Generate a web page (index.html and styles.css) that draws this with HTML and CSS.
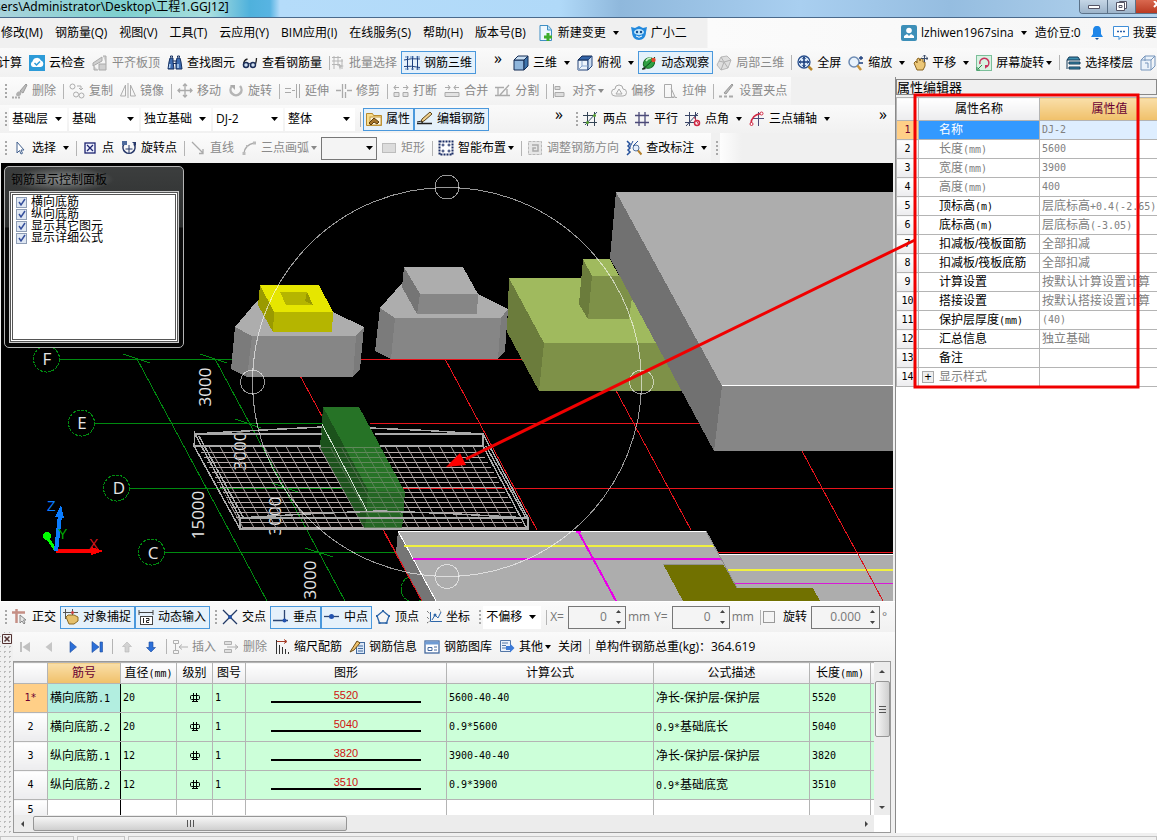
FILE: index.html
```html
<!DOCTYPE html>
<html lang="zh-CN">
<head>
    <meta charset="UTF-8">
    <meta name="viewport" content="width=device-width, initial-scale=1.0">
    <title>工程1.GGJ12</title>
    <link rel="stylesheet" href="styles.css">
</head>
<body>
<svg class="sprite" aria-hidden="true">
    <symbol id="i-newdoc" viewBox="0 0 16 16"><path d="M2 .5h8l3.500 4v11H2z" fill="#eef7fd" stroke="#3f8fc4"/><path d="M9.500 1v4h4" fill="#bfe0f4" stroke="#3f8fc4"/><path d="M8.500 8h3v2.500H14v3h-2.500V16h-3v-2.500H6v-3h2.500z" fill="#3fae2a"/></symbol>
    <symbol id="i-mascot" viewBox="0 0 16 16"><path d="M4 3l4-2 4 2 4-1-1 5c0 5-3 8-7 8s-7-3-7-8L0 2z" fill="#2389dd"/><ellipse cx="8" cy="7" rx="5" ry="3" fill="#bfe4fb"/><circle cx="6" cy="7" r="1.200" fill="#124a8c"/><circle cx="10" cy="7" r="1.200" fill="#124a8c"/><path d="M5 11q3 2.500 6 0" stroke="#fff" fill="none"/></symbol>
    <symbol id="i-user" viewBox="0 0 16 16"><rect width="16" height="16" rx="2" fill="#3d8fb8"/><circle cx="8" cy="5.500" r="2.800" fill="#fff"/><path d="M3 13v-2l3-2 2 2 2-2 3 2v2z" fill="#fff"/></symbol>
    <symbol id="i-bell" viewBox="0 0 16 16"><path d="M8 1c-3 0-4 2-4 5v3l-2 3h12l-2-3V6c0-3-1-5-4-5z" fill="#1f86e8"/><path d="M6 13h4l-2 2z" fill="#174f96"/></symbol>
    <symbol id="i-chat" viewBox="0 0 16 16"><path d="M.500 1.500h15v10H9l-3 3v-3H.500z" fill="#fff" stroke="#3f8ed8"/><path d="M4 6.500h2m1 0h2m1 0h2" stroke="#2a5fa8" stroke-width="1.500"/></symbol>
    <symbol id="i-cloud" viewBox="0 0 16 16"><rect width="16" height="16" fill="#2d9bd8"/><path d="M4 12a3 3 0 0 1-.5-5.500A4.500 4.500 0 0 1 12 5.500 3.400 3.400 0 0 1 12 12z" fill="#fff"/><path d="M5.500 8l2 2 3.500-3.500" stroke="#2d9bd8" stroke-width="1.500" fill="none"/></symbol>
    <symbol id="i-slabtop" viewBox="0 0 16 16"><path d="M1 8l9-6v4l-9 5zM7 9h7v6H7zM11 1h3v8M2 11v4h4" fill="#d0d0d0" stroke="#aaa"/></symbol>
    <symbol id="i-find" viewBox="0 0 16 16"><path d="M3 3h3v4l1 7H1l1-7zM10 3h3l1 4 1 7H9V7z" fill="#3e6cb0" stroke="#152f5f"/><path d="M6 6h4M6 8.500h4M3.500 2.500V1h2v1.500M10.500 2.500V1h2v1.500" stroke="#152f5f" fill="none"/><path d="M3 9l-.5 4M11 9v4" stroke="#b8d6f5" stroke-width="1.500"/></symbol>
    <symbol id="i-glasses" viewBox="0 0 16 16"><path d="M5.500 4q-4 1-4 6M14.500 3q0 3-1 6" fill="none" stroke="#222" stroke-width="1.300"/><circle cx="4" cy="10" r="2.500" fill="#cfe0f2" stroke="#1c2e58" stroke-width="1.500"/><circle cx="11" cy="10" r="2.500" fill="#cfe0f2" stroke="#1c2e58" stroke-width="1.500"/><path d="M6 9q1-1 2.500 0" fill="none" stroke="#1c2e58"/></symbol>
    <symbol id="i-batch" viewBox="0 0 16 16"><path d="M.500 1v14M3 2.500h9M3 6h11M3 9.500h8M5 1v13M9 1v10M13 4v10" stroke="#b5b5b5" fill="none"/><path d="M9 9l6 2-3 1-1 3z" fill="#bbb"/></symbol>
    <symbol id="i-rebar3d" viewBox="0 0 16 16"><path d="M3.500 1v14M8.500 1v14M13.500 1v14M0 5q7-2 16-1M0 11.500q7-1 16 1" stroke="#1c3f7e" fill="none"/><path d="M1 2h4M6 2h4M12 2h4M1 14h4M7 14h3M12 14h4" stroke="#5f87bd"/></symbol>
    <symbol id="i-cube" viewBox="0 0 16 16"><path d="M1 5h10v10H1z" fill="#8fb6dc" stroke="#142d55"/><path d="M1 5l4-4h10l-4 4z" fill="#c8def2" stroke="#142d55"/><path d="M11 5l4-4v10l-4 4z" fill="#3f74ab" stroke="#142d55"/></symbol>
    <symbol id="i-topview" viewBox="0 0 16 16"><path d="M1 5h10v10H1z" fill="#eef4fb" stroke="#24457a"/><path d="M1 5l4-4h10l-4 4z" fill="#3465a8" stroke="#142d55"/><path d="M11 5l4-4v10l-4 4z" fill="#cbdcf0" stroke="#24457a"/><path d="M5 6v5l-4 4M5 11h6" stroke="#88a5cc" fill="none"/></symbol>
    <symbol id="i-orbit" viewBox="0 0 16 16"><ellipse cx="8" cy="8" rx="6" ry="5" transform="rotate(-35 8 8)" fill="#2ea043" stroke="#176b28"/><path d="M1 14Q6 12 14 2" stroke="#0b4718" fill="none"/><path d="M5 6q2-3 5-3" stroke="#c7f0c8" stroke-width="1.500" fill="none"/><circle cx="12.500" cy="5" r="2.200" fill="#e0452c"/><path d="M1 15l2-3 2 2z" fill="#222"/></symbol>
    <symbol id="i-local3d" viewBox="0 0 16 16"><path d="M1 10L5 2l6-1 4 4-3 8-7 2z" fill="#dedede" stroke="#b8b8b8"/><path d="M5 2l3 5 7-2M8 7l-3 8M3 6l4 1M8 7l4 6" stroke="#b0b0b0" fill="none"/></symbol>
    <symbol id="i-full" viewBox="0 0 16 16"><circle cx="7" cy="7" r="6" fill="#dbeafa" stroke="#294f8c" stroke-width="1.300"/><path d="M7 2.500v9M2.500 7h9" stroke="#163a7a" stroke-width="1.500"/><path d="M5.500 4L7 2l1.500 2M5.500 10L7 12l1.500-2M4 5.500L2 7l2 1.500M10 5.500L12 7l-2 1.500" fill="none" stroke="#163a7a"/><path d="M11.500 11.500l3.500 3.500" stroke="#b8862b" stroke-width="2.500"/></symbol>
    <symbol id="i-zoom" viewBox="0 0 16 16"><circle cx="6" cy="7" r="5" fill="#e8f2fc" stroke="#6d8bb3" stroke-width="1.500"/><path d="M9.500 10.500L13 15" stroke="#c8933a" stroke-width="2.500"/><path d="M11 3h4M13 1v4M11 8h4" stroke="#1c3f7e" stroke-width="1.300"/></symbol>
    <symbol id="i-pan" viewBox="0 0 16 16"><path d="M2 8l2-2 1 2V4l2-1 1 3 1-3 2 1v3l2 0v4l-2 4H5z" fill="#ecc777" stroke="#8a6420"/><path d="M12.500 0v7M9 3.500h7M11 1.500L12.500 0 14 1.500M14.500 2L16 3.500 14.500 5" stroke="#3c4d6b" fill="none"/></symbol>
    <symbol id="i-spin" viewBox="0 0 16 16"><rect x=".5" y=".5" width="15" height="15" fill="#d9f2e2" stroke="#7bbf9a"/><path d="M4 9a4.500 4.500 0 1 1 6 3" fill="none" stroke="#c8305c" stroke-width="1.500"/><path d="M12 10l-3 4 0-4z" fill="#c8305c"/><path d="M2 14l4-4M1 12v3h3" stroke="#2c8a4c" fill="none"/></symbol>
    <symbol id="i-floors" viewBox="0 0 16 16"><path d="M4 2h9l2 3H2zM4 7h11v2H4zM4 12h11v2H4z" fill="#3e8fb0" stroke="#143a58"/><path d="M2 5v9" stroke="#143a58" fill="none"/></symbol>
    <symbol id="i-wirecube" viewBox="0 0 16 16"><path d="M1 5h10v10H1zM1 5l4-4h10l-4 4M15 1v10l-4 4M5 1v5M5 8h3v5" fill="#eaf2fa" stroke="#7695bb"/></symbol>
    <symbol id="i-brush" viewBox="0 0 16 16"><path d="M8 8l6-7 1 1-4 8z" fill="#bdbdbd" stroke="#999"/><path d="M4 11q2-4 5-2 1 3-2 4-3 1-3-2z" fill="#b0b0b0"/><path d="M0 14.500h2m1 0h2m1 0h2" stroke="#aaa" stroke-width="2"/></symbol>
    <symbol id="i-copy" viewBox="0 0 16 16"><g fill="none" stroke="#adadad"><circle cx="3.500" cy="3.500" r="2.500"/><circle cx="7" cy="11.500" r="2.500"/><circle cx="12.500" cy="12.500" r="2.500"/><path d="M8 3h4v4M10 5l2 2 2-2"/></g></symbol>
    <symbol id="i-mirror" viewBox="0 0 16 16"><path d="M5.500 2v11h-5zM10.500 2v11h5zM8 0v15" fill="none" stroke="#adadad"/></symbol>
    <symbol id="i-move" viewBox="0 0 16 16"><path d="M8 1v13M1 7.500h14M6 3l2-2 2 2M6 12l2 2 2-2M3 5.500l-2 2 2 2M13 5.500l2 2-2 2" fill="none" stroke="#aaa" stroke-width="1.300"/></symbol>
    <symbol id="i-rotate" viewBox="0 0 16 16"><path d="M4 3a5.500 5.500 0 1 0 8 0" fill="none" stroke="#b5b5b5" stroke-width="2.500"/><path d="M2 2h5v5z" fill="#aaa"/></symbol>
    <symbol id="i-extend" viewBox="0 0 16 16"><path d="M0 5.500h6M0 9.500h6M7 7.500h3M11.500 1v14M14.500 1v14" fill="none" stroke="#aaa"/></symbol>
    <symbol id="i-trim" viewBox="0 0 16 16"><path d="M0 7.500h5M11 7.500h5M6.500 1v14M9.500 1v5M9.500 9v6" fill="none" stroke="#aaa" stroke-width="1.300"/></symbol>
    <symbol id="i-break" viewBox="0 0 16 16"><path d="M1 4.500h5M10 4.500h5M3 2L1 4.500 3 7M13 2l2 2.500L13 7M1 9.500h5v4H1zM10 9.500h5v4h-5z" fill="#e2e2e2" stroke="#aaa"/></symbol>
    <symbol id="i-merge" viewBox="0 0 16 16"><path d="M1 4.500h5M10 4.500h5M4 2l2 2.500L4 7M12 2l-2 2.500L12 7M1 9.500h14v4H1z" fill="#e2e2e2" stroke="#aaa"/></symbol>
    <symbol id="i-split" viewBox="0 0 16 16"><path d="M0 4.500h9M0 12.500h15M3 4v8M12 6v6M5 12L14 2" fill="none" stroke="#aaa" stroke-width="1.300"/></symbol>
    <symbol id="i-align" viewBox="0 0 16 16"><path d="M1.500 1v14M3 3.500h5v3H3zM3 9.500h9v4H3z" fill="#ddd" stroke="#aaa"/></symbol>
    <symbol id="i-offset" viewBox="0 0 16 16"><path d="M4 13a3.500 3.500 0 0 1 0-7 4 4 0 0 1 8 0 3.500 3.500 0 0 1 0 7z" fill="none" stroke="#aaa"/><path d="M5 11l3-5 3 5z" fill="none" stroke="#aaa"/></symbol>
    <symbol id="i-stretch" viewBox="0 0 16 16"><path d="M2.500 1.500h7v13h-7zM9 5l4 9h-4" fill="none" stroke="#aaa"/><path d="M4 14.500h11" stroke="#aaa" stroke-dasharray="2 1"/></symbol>
    <symbol id="i-grippt" viewBox="0 0 16 16"><path d="M5 10L13 1l1 1-7 9z" fill="#bbb" stroke="#999"/><path d="M0 13.500h3m2 0h3m2 0h4" stroke="#aaa" stroke-width="2"/></symbol>
    <symbol id="i-prop" viewBox="0 0 16 16"><path d="M.500 2.500h6l1 2h8v10H.500z" fill="#f7dc8f" stroke="#b98a2b"/><rect x="4" y="6" width="11" height="8" fill="#fff7dd" stroke="#c49a42"/><path d="M3 12l5-5 5 4-2 2-3-2-3 3z" fill="#a5752b" stroke="#5b3c10"/></symbol>
    <symbol id="i-edit" viewBox="0 0 16 16"><path d="M0 12.500h15" stroke="#222" stroke-width="1.500"/><path d="M4 11l1-3 8-7 2 2-8 7z" fill="#f0cf8a" stroke="#5c4720"/><path d="M0 11q4-2 6 1" fill="none" stroke="#222"/></symbol>
    <symbol id="i-twopt" viewBox="0 0 16 16"><path d="M4.500 1v14M11.500 1v14M0 4.500h13M0 11.500h14" stroke="#345" fill="none"/><path d="M2 14L14 1" stroke="#35536e"/><circle cx="4.500" cy="11.500" r="1.500" fill="#58a030"/><circle cx="11.500" cy="4.500" r="1.500" fill="#58a030"/></symbol>
    <symbol id="i-parallel" viewBox="0 0 16 16"><path d="M5 1v14M11 1v14M1 4.500h14M1 11.500h14" stroke="#4b4a78" stroke-width="1.300" fill="none"/></symbol>
    <symbol id="i-ptangle" viewBox="0 0 16 16"><path d="M4.500 1v14M10.500 1v8M0 4.500h13M0 11.500h9M1 15L13 2" stroke="#3a4668" fill="none"/><circle cx="12" cy="12" r="2.500" fill="none" stroke="#d02844" stroke-width="1.500"/><path d="M9 6l5 8" stroke="#d02844"/></symbol>
    <symbol id="i-threept" viewBox="0 0 16 16"><path d="M9.500 1v14M3 7.500h12" stroke="#4b4a78"/><path d="M2 13Q2 4 12 2.500" fill="none" stroke="#d02844" stroke-width="1.500"/><circle cx="2.500" cy="13" r="1.500" fill="#fff" stroke="#d02844"/><circle cx="12.500" cy="2.500" r="1.500" fill="#fff" stroke="#d02844"/></symbol>
    <symbol id="i-cursor" viewBox="0 0 16 16"><path d="M5 2v11l2.500-2.500L9 14l1.500-.7L9 10h3z" fill="#fff" stroke="#43618e"/></symbol>
    <symbol id="i-point" viewBox="0 0 16 16"><rect x="3" y="3" width="10" height="10" fill="#f1f3ff" stroke="#1d2470" stroke-width="1.300"/><path d="M5 5l6 6M11 5l-6 6" stroke="#1d2470" stroke-width="1.300"/></symbol>
    <symbol id="i-rotpoint" viewBox="0 0 16 16"><path d="M3 4a6 6 0 1 0 10 0" fill="none" stroke="#27386a" stroke-width="1.600"/><path d="M8 5v8M4.500 9h7" stroke="#27386a"/><rect x="1" y="1" width="5" height="4" fill="#4e6a9c"/><path d="M11 2h4v4z" fill="#27386a"/></symbol>
    <symbol id="i-line" viewBox="0 0 16 16"><path d="M2 2l11 11M13 9v4.500H9" stroke="#aaa" stroke-width="1.300" fill="none"/></symbol>
    <symbol id="i-arc" viewBox="0 0 16 16"><path d="M3 13Q4 5 13 3" stroke="#aaa" stroke-width="1.300" fill="none"/><path d="M1.500 12h3v3h-3zM12 1.500h3v3h-3zM5 5h2v2H5z" fill="#bbb"/></symbol>
    <symbol id="i-rect" viewBox="0 0 16 16"><rect x="1.500" y="3.500" width="13" height="9" fill="#dcdcdc" stroke="#bdbdbd"/></symbol>
    <symbol id="i-smart" viewBox="0 0 16 16"><rect x="1.500" y="1.500" width="13" height="13" fill="#fff" stroke="#1d2f66" stroke-width="2" stroke-dasharray="2 1"/><path d="M5 3.500v3M3.500 5h3M11 3.500v3M9.500 5h3M5 9.500v3M3.500 11h3M11 9.500v3M9.500 11h3" stroke="#1d2f66"/></symbol>
    <symbol id="i-adjust" viewBox="0 0 16 16"><path d="M1.500 1.500h13v13h-13z" fill="#e6e6e6" stroke="#b8b8b8" stroke-dasharray="3 1"/><path d="M5 5h6v6H6V8h3" fill="none" stroke="#aaa" stroke-width="1.500"/></symbol>
    <symbol id="i-check" viewBox="0 0 16 16"><path d="M1 1l3 3-2 2 2 2-2 2 2 2-3 3" fill="none" stroke="#26529c" stroke-width="1.500"/><path d="M7 1l-3 6M12 1L7 6" stroke="#26529c"/><circle cx="10" cy="8" r="3" fill="#e5eefb" stroke="#55749f"/><path d="M12 10.500l3.500 4" stroke="#b5812d" stroke-width="2"/></symbol>
    <symbol id="i-ortho" viewBox="0 0 16 16"><path d="M0 3.500h13M4.500 0v14" stroke="#c58f85" stroke-width="2.500"/><path d="M8 6v8l2-2 2 3 1-1-1.500-3H14z" fill="#e6e6e6" stroke="#888"/></symbol>
    <symbol id="i-snap" viewBox="0 0 16 16"><path d="M0 3.500h15M2.500 0v10M9.500 0v6" stroke="#555"/><path d="M3 8l2-2h6l4 2v4l-4 3H6z" fill="#e5c06c" stroke="#8b6a24"/><circle cx="9.500" cy="3.500" r="1.500" fill="#c44"/></symbol>
    <symbol id="i-dyninput" viewBox="0 0 16 16"><path d="M1 1v5M15 1v5M1 3.500h14" stroke="#444"/><rect x="2.500" y="7.500" width="12" height="8" fill="#fff" stroke="#444"/><path d="M5.500 9v5M8 9.500h3v2H8.500v2H11" fill="none" stroke="#222"/></symbol>
    <symbol id="i-cross" viewBox="0 0 16 16"><path d="M1 1l14 14M15 1L1 15" stroke="#223a66" stroke-width="1.300"/><circle cx="8" cy="8" r="2" fill="#2453a8"/></symbol>
    <symbol id="i-perp" viewBox="0 0 16 16"><path d="M0 11.500h15M11.500 1v11" stroke="#2b4673" stroke-width="1.300"/><circle cx="11.500" cy="11.500" r="2" fill="#2453b0"/></symbol>
    <symbol id="i-mid" viewBox="0 0 16 16"><path d="M0 7.500h15" stroke="#2b4673" stroke-width="1.300"/><circle cx="7.500" cy="7.500" r="2.500" fill="#2453b0"/></symbol>
    <symbol id="i-vertex" viewBox="0 0 16 16"><path d="M8 2l6 5-2.500 7h-7L2 7z" fill="none" stroke="#2e66a8" stroke-width="1.300"/><path d="M7 1h2v2H7zM13 6h2v2h-2zM1 6h2v2H1zM3.500 13h2v2h-2zM10.500 13h2v2h-2z" fill="#2e66a8"/></symbol>
    <symbol id="i-coord" viewBox="0 0 16 16"><path d="M4.500 3v9.500H16M6 11l3-5 3 3 3-6" fill="none" stroke="#2e66a8"/><path d="M1 2l3 3M13 0l2 3M1 8l2 2M1 14l3-2" stroke="#444" stroke-dasharray="1 1"/><circle cx="9" cy="6" r="1.500" fill="#2e66a8"/></symbol>
    <symbol id="i-first" viewBox="0 0 16 16"><path d="M3 3h2v10H3zM13 3v10L5.500 8z" fill="#c0c0c0"/></symbol>
    <symbol id="i-prev" viewBox="0 0 16 16"><path d="M11 3v10L4.500 8z" fill="#c6c6c6"/></symbol>
    <symbol id="i-next" viewBox="0 0 16 16"><path d="M5 2.500v11L11.500 8z" fill="#2c6fd8" stroke="#1b4c9e" stroke-width=".6"/></symbol>
    <symbol id="i-last" viewBox="0 0 16 16"><path d="M3 2.500v11L10 8zM11 3h2.500v10H11z" fill="#2c6fd8" stroke="#1b4c9e" stroke-width=".6"/></symbol>
    <symbol id="i-up" viewBox="0 0 16 16"><path d="M8 3l4.500 4.500H10V13H6V7.500H3.500z" fill="#d2d2d2" stroke="#b5b5b5" stroke-width=".6"/></symbol>
    <symbol id="i-down" viewBox="0 0 16 16"><path d="M8 13l4.500-4.500H10V3H6v5.500H3.500z" fill="#2c6fd8" stroke="#1b4c9e" stroke-width=".6"/></symbol>
    <symbol id="i-insert" viewBox="0 0 16 16"><path d="M1.500 1.500h5v3h-5zM1.500 11.500h5v3h-5zM7 8h9M10 5.500L7 8l3 2.500M3.500 5v6" fill="none" stroke="#b0b0b0"/></symbol>
    <symbol id="i-remove" viewBox="0 0 16 16"><path d="M1.500 2.500h7v3h-7zM1.500 10.500h7v3h-7zM4 8h11M12 5.500L15 8l-3 2.500" fill="#e0e0e0" stroke="#b0b0b0"/></symbol>
    <symbol id="i-scale" viewBox="0 0 16 16"><path d="M2.500 1v14M5.500 6v9M8.500 8v7M11.500 10v5M14.500 13v2" stroke="#333"/><path d="M3 2.500h9M10 .5l3 2-3 2" fill="none" stroke="#a33b26"/></symbol>
    <symbol id="i-info" viewBox="0 0 16 16"><rect x="7.500" y="3.500" width="8" height="11" fill="#dbe8f8" stroke="#436a9d"/><path d="M9 7h5M9 9.500h5M9 12h5" stroke="#436a9d"/><path d="M1 13l7-11 3 2-6 7z" fill="#f0c36c" stroke="#6b4d1a"/></symbol>
    <symbol id="i-lib" viewBox="0 0 16 16"><rect x="1" y="2" width="14" height="12" fill="#fff" stroke="#44699e" stroke-width="1.300"/><path d="M1 4h14" stroke="#6f9bd3" stroke-width="3"/><path d="M4 8.500h4v3H4zM10 8h3M10 11h3" fill="none" stroke="#44699e"/></symbol>
    <symbol id="i-other" viewBox="0 0 16 16"><path d="M1.500 1.500h10v11h-10z" fill="#eaf1fb" stroke="#5376a6"/><path d="M3 4h6M3 6.500h4M3 9h4" stroke="#5376a6"/><path d="M7 7h4V4.500l4.500 4.500-4.500 4.500V11H7z" fill="#3c7ad8"/></symbol>
    <symbol id="i-grade" viewBox="0 0 12 12"><rect x="1.500" y="3.500" width="9" height="4" rx="1" fill="none" stroke="#000"/><path d="M4.500 1v9M7.500 1v9M3 9.500h6" stroke="#000"/></symbol>
</svg>

<div class="app">
    <header class="titlebar">
        <span class="title-text">sers\Administrator\Desktop\工程1.GGJ12]</span>
        <div class="window-buttons">
            <button aria-label="最小化"><svg viewBox="0 0 27 12"><path d="M8.500 4.500h11v3h-11z" fill="#fff" stroke="#556"/></svg></button>
            <button aria-label="还原"><svg viewBox="0 0 27 12"><path d="M11.500.5h7v7h-7z" fill="#fff" stroke="#556"/><path d="M8.500 1.500h8v8h-8zM11 4.500h3v2h-3z" fill="#fff" stroke="#556"/></svg></button>
            <button class="close-window" aria-label="关闭窗口"><svg viewBox="0 0 27 12"><path d="M18 0l6 6M24 0l-6 6" stroke="#fff" stroke-width="2"/></svg></button>
        </div>
    </header>

    <nav class="menubar">
        <button>修改(M)</button>
        <button>钢筋量(Q)</button>
        <button>视图(V)</button>
        <button>工具(T)</button>
        <button>云应用(Y)</button>
        <button>BIM应用(I)</button>
        <button>在线服务(S)</button>
        <button>帮助(H)</button>
        <button>版本号(B)</button>
        <button class="has-icon"><svg class="icon"><use href="#i-newdoc"/></svg>新建变更<i class="arrow"></i></button>
        <button class="has-icon"><svg class="icon"><use href="#i-mascot"/></svg>广小二</button>
        <div class="account">
            <button class="has-icon"><svg class="icon"><use href="#i-user"/></svg>lzhiwen1967sina<i class="arrow"></i></button>
            <button>造价豆:0</button>
            <button aria-label="通知"><svg class="icon"><use href="#i-bell"/></svg></button>
            <button class="has-icon"><svg class="icon"><use href="#i-chat"/></svg>我要建议</button>
        </div>
    </nav>

    <div class="toolbar toolbar-main">
        <button class="tool">计算</button>
        <button class="tool"><svg class="icon"><use href="#i-cloud"/></svg>云检查</button>
        <button class="tool off"><svg class="icon"><use href="#i-slabtop"/></svg>平齐板顶</button>
        <button class="tool"><svg class="icon"><use href="#i-find"/></svg>查找图元</button>
        <button class="tool"><svg class="icon"><use href="#i-glasses"/></svg>查看钢筋量</button>
        <button class="tool off"><svg class="icon"><use href="#i-batch"/></svg>批量选择</button>
        <button class="tool on"><svg class="icon"><use href="#i-rebar3d"/></svg>钢筋三维</button>
        <button class="more" aria-label="更多">»</button>
        <button class="tool"><svg class="icon"><use href="#i-cube"/></svg>三维<i class="arrow"></i></button>
        <button class="tool"><svg class="icon"><use href="#i-topview"/></svg>俯视<i class="arrow"></i></button>
        <button class="tool on"><svg class="icon"><use href="#i-orbit"/></svg>动态观察</button>
        <button class="tool off"><svg class="icon"><use href="#i-local3d"/></svg>局部三维</button>
        <i class="sep"></i>
        <button class="tool"><svg class="icon"><use href="#i-full"/></svg>全屏</button>
        <button class="tool"><svg class="icon"><use href="#i-zoom"/></svg>缩放<i class="arrow"></i></button>
        <button class="tool"><svg class="icon"><use href="#i-pan"/></svg>平移<i class="arrow"></i></button>
        <button class="tool tight"><svg class="icon"><use href="#i-spin"/></svg>屏幕旋转<i class="arrow"></i></button>
        <i class="sep"></i>
        <button class="tool"><svg class="icon"><use href="#i-floors"/></svg>选择楼层</button>
        <button class="tool" aria-label="线框"><svg class="icon"><use href="#i-wirecube"/></svg></button>
    </div>

    <div class="workspace">
        <main class="left">
            <div class="toolbar">
                <div class="strip">
                    <i class="grip"></i>
                    <button class="tool off"><svg class="icon"><use href="#i-brush"/></svg>删除</button>
                    <i class="sep"></i>
                    <button class="tool off"><svg class="icon"><use href="#i-copy"/></svg>复制</button>
                    <button class="tool off"><svg class="icon"><use href="#i-mirror"/></svg>镜像</button>
                    <i class="sep"></i>
                    <button class="tool off"><svg class="icon"><use href="#i-move"/></svg>移动</button>
                    <button class="tool off"><svg class="icon"><use href="#i-rotate"/></svg>旋转</button>
                    <i class="sep"></i>
                    <button class="tool off"><svg class="icon"><use href="#i-extend"/></svg>延伸</button>
                    <button class="tool off"><svg class="icon"><use href="#i-trim"/></svg>修剪</button>
                    <i class="sep"></i>
                    <button class="tool off"><svg class="icon"><use href="#i-break"/></svg>打断</button>
                    <button class="tool off"><svg class="icon"><use href="#i-merge"/></svg>合并</button>
                    <button class="tool off"><svg class="icon"><use href="#i-split"/></svg>分割</button>
                    <i class="sep"></i>
                    <button class="tool off tight"><svg class="icon"><use href="#i-align"/></svg>对齐<i class="arrow"></i></button>
                    <button class="tool off"><svg class="icon"><use href="#i-offset"/></svg>偏移</button>
                    <button class="tool off"><svg class="icon"><use href="#i-stretch"/></svg>拉伸</button>
                    <i class="sep"></i>
                    <button class="tool off"><svg class="icon"><use href="#i-grippt"/></svg>设置夹点</button>
                </div>
            </div>

            <div class="toolbar">
                <i class="grip"></i>
                <select class="pick pick-floor" aria-label="楼层"><option>基础层</option></select>
                <select class="pick" aria-label="构件分类"><option>基础</option></select>
                <select class="pick" aria-label="构件类型"><option>独立基础</option></select>
                <select class="pick" aria-label="构件"><option>DJ-2</option></select>
                <select class="pick" aria-label="范围"><option>整体</option></select>
                <i class="sep"></i>
                <button class="tool on"><svg class="icon"><use href="#i-prop"/></svg>属性</button>
                <button class="tool on"><svg class="icon"><use href="#i-edit"/></svg>编辑钢筋</button>
                <button class="more more-far" aria-label="更多">»</button>
                <i class="grip"></i>
                <button class="tool"><svg class="icon"><use href="#i-twopt"/></svg>两点</button>
                <button class="tool"><svg class="icon"><use href="#i-parallel"/></svg>平行</button>
                <button class="tool"><svg class="icon"><use href="#i-ptangle"/></svg>点角<i class="arrow"></i></button>
                <button class="tool"><svg class="icon"><use href="#i-threept"/></svg>三点辅轴<i class="arrow"></i></button>
                <button class="more more-end" aria-label="更多">»</button>
            </div>

            <div class="toolbar toolbar-draw">
                <div class="strip">
                    <i class="grip"></i>
                    <button class="tool"><svg class="icon"><use href="#i-cursor"/></svg>选择<i class="arrow"></i></button>
                    <i class="sep"></i>
                    <button class="tool"><svg class="icon"><use href="#i-point"/></svg>点</button>
                    <button class="tool"><svg class="icon"><use href="#i-rotpoint"/></svg>旋转点</button>
                    <i class="sep"></i>
                    <button class="tool off"><svg class="icon"><use href="#i-line"/></svg>直线</button>
                    <button class="tool off tight"><svg class="icon"><use href="#i-arc"/></svg>三点画弧<i class="arrow"></i></button>
                    <select class="pick pick-boxed" aria-label="画弧方式"><option></option></select>
                    <button class="tool off"><svg class="icon"><use href="#i-rect"/></svg>矩形</button>
                    <i class="sep"></i>
                    <button class="tool tight"><svg class="icon"><use href="#i-smart"/></svg>智能布置<i class="arrow"></i></button>
                    <i class="sep"></i>
                    <button class="tool off"><svg class="icon"><use href="#i-adjust"/></svg>调整钢筋方向</button>
                    <button class="tool"><svg class="icon"><use href="#i-check"/></svg>查改标注<i class="arrow"></i></button>
                </div>
                <i class="grip"></i>
                <div class="strip strip-empty"></div>
            </div>

            <section class="viewport">
                <svg class="scene" viewBox="1 163 892 438" preserveAspectRatio="xMinYMin slice">
                    <defs>
                        <pattern id="bars-x" width="10" height="5" patternUnits="userSpaceOnUse"><path d="M0 2.500h10" stroke="#b9abab"/></pattern>
                        <pattern id="bars-y" width="11" height="10" patternUnits="userSpaceOnUse" patternTransform="skewX(29)"><path d="M5.500 0v10" stroke="#a89f9f"/></pattern>
                    </defs>
                    <rect x="0" y="0" width="3000" height="3000" fill="#000"/>

                    <!-- axis grid -->
                    <g stroke="#008a10" fill="none">
                        <path d="M59 359.500h180M94 423.500h230M129 488.500h270M165 552.500h232"/>
                        <path d="M137 359l130 242M215 359l130 242"/>
                        <path d="M123 354l27 9M200 354l27 9M235 419l26 9M272 483l26 9M305 548l28 9"/>
                        <g stroke-dasharray="3 1">
                            <circle cx="46.500" cy="359" r="13"/>
                            <circle cx="81.500" cy="423" r="13"/>
                            <circle cx="116.500" cy="488" r="13"/>
                            <circle cx="151.500" cy="552" r="13"/>
                            <circle cx="414" cy="589" r="13"/>
                        </g>
                    </g>
                    <g stroke="#e8141c" fill="none">
                        <path d="M360 359.500h300"/>
                        <path d="M370 423.500h340"/>
                        <path d="M400 488.500h493"/>
                        <path d="M700 552.500h193"/>
                        <path d="M291 359l131 242M445 359l92 171M599 359l92 171M802 451l81 150"/>
                    </g>
                    <g class="axis-label">
                        <text x="47" y="365">F</text>
                        <text x="82" y="429">E</text>
                        <text x="119" y="494">D</text>
                        <text x="153" y="559">C</text>
                        <text transform="translate(211 387) rotate(-90)">3000</text>
                        <text transform="translate(246 451) rotate(-90)">3000</text>
                        <text transform="translate(281 516) rotate(-90)">3000</text>
                        <text transform="translate(316 580) rotate(-90)">3000</text>
                        <text transform="translate(204 515) rotate(-90)">15000</text>
                    </g>

                    <!-- foundation with yellow socket -->
                    <path d="M235 327l22-26 76 11 31 15-8 9H252z" fill="#adadad"/>
                    <path d="M235 327l17 9-5 41-16-8z" fill="#7b7b7b"/>
                    <path d="M252 336h104l-3 41H247z" fill="#868686"/>
                    <path d="M364 327l-8 9-3 41 7-8z" fill="#7b7b7b"/>
                    <path d="M260 285h59l14 27h-59z" fill="#e6e600"/>
                    <path d="M260 285l14 27-1 20-15-27z" fill="#9a9a00"/>
                    <path d="M274 312h59l-1 20h-59z" fill="#b5b500"/>
                    <path d="M280 292h27l6 13h-27z" fill="#b5b500"/>
                    <path d="M307 292l6 13-8-4z" fill="#999900"/>

                    <!-- stepped foundation -->
                    <path d="M402 283l-22 25 15 10h106l7-9-30-15z" fill="#adadad"/>
                    <path d="M380 308l15 10-4 41-16-8z" fill="#7b7b7b"/>
                    <path d="M395 318h106l-3 41H391z" fill="#868686"/>
                    <path d="M508 309l-7 9-3 41 7-8z" fill="#7b7b7b"/>
                    <path d="M404 267h59l15 27h-58z" fill="#adadad"/>
                    <path d="M404 267l16 27-3 20-15-27z" fill="#757575"/>
                    <path d="M420 294h58l-1 20h-60z" fill="#868686"/>

                    <!-- olive foundation -->
                    <path d="M509 278h121l40 65H544z" fill="#a0ba5e"/>
                    <path d="M509 278l35 65-5 48-32-59z" fill="#6b7c3c"/>
                    <path d="M544 343h126l30 48H539z" fill="#7e9148"/>
                    <path d="M583 259h27l9 17h-27z" fill="#a0ba5e"/>
                    <path d="M583 259l9 17-4 43-9-15z" fill="#6b7c3c"/>
                    <path d="M592 276h28l12 21-3 22h-41z" fill="#7e9148"/>

                    <!-- large block -->
                    <path d="M616 192h277v194H722z" fill="#adadad"/>
                    <path d="M616 192l106 194-8 65-104-193z" fill="#717171"/>
                    <path d="M722 386h171v65H714z" fill="#868686"/>
                    <path d="M722 385.500h171" stroke="#fff"/>

                    <!-- selected pad with rebar mesh -->
                    <path d="M200 450h281l44 78H242z" fill="url(#bars-x)"/>
                    <path d="M200 447h281l44 81H242z" fill="url(#bars-y)"/>
                    <path d="M323 407h36l46 85-3 38h-37l-45-83z" fill="#1b521b"/>
                    <path d="M323 407h36l46 85-37-2z" fill="#267326"/>
                    <path d="M368 490l37 2-3 38h-37z" fill="#236623"/>
                    <g opacity=".4">
                        <path d="M320 447h60l25 45-3 38h-37z" fill="url(#bars-x)"/>
                        <path d="M320 447h60l25 45-3 38h-37z" fill="url(#bars-y)"/>
                    </g>
                    <path d="M322 424l45 87" stroke="#cfe0cf" fill="none"/>
                    <g fill="none" stroke="#aaa" stroke-width="1.500">
                        <path d="M195 434q64-4 127-7M370 428q57 2 113 6l45 84v11H240l-46-83 1-12 45 84v12M240 518h288M240 518q70-5 140-7 74 2 147 7"/>
                        <path d="M195 434h127M375 434h108v12l44 83M194 446h127M380 446h102M199 436l44 81M486 446l40 72"/>
                    </g>

                    <!-- raft slab -->
                    <path d="M398 531h308l12 23h175v47H436z" fill="#adadad"/>
                    <path d="M398 531l-2 21 26 49h14z" fill="#757575"/>
                    <path d="M663 564h60l14 24h76l7 13H683z" fill="#717100"/>
                    <path d="M663 564h60" stroke="#909090"/>
                    <path d="M436 601l-38-70h308M718 554.500h175" stroke="#fff" fill="none"/>
                    <path d="M404 545.500h310M727 570h166" stroke="#f0f040" stroke-width="2"/>
                    <path d="M413 558.500h308M578 531l38 70" stroke="#e800e8" stroke-width="2"/>
                    <path d="M735 583.500h158" stroke="#d818d8"/>
                    <path d="M576 531h5v2h-5z" fill="#f0f"/>
                    <path d="M384 532l38 69M858 554l25 47" stroke="#d8141c"/>
                    <path d="M706 531l31 57" stroke="#8c8c8c"/>

                    <!-- orbit ring -->
                    <g fill="none" stroke="#fff" stroke-opacity=".6">
                        <circle cx="447" cy="382" r="194.500"/>
                        <circle cx="447" cy="187" r="12"/>
                        <circle cx="252.500" cy="382" r="12"/>
                        <circle cx="641.500" cy="382" r="12"/>
                        <circle cx="447" cy="576.500" r="12"/>
                    </g>

                    <!-- axis tripod -->
                    <path d="M56 551L47 537" stroke="#0f0" stroke-width="3"/>
                    <circle cx="47" cy="536" r="4" fill="#0f0"/>
                    <path d="M56 551h38" stroke="#f00" stroke-width="4"/>
                    <path d="M91 547l12 4-12 4z" fill="#f00"/>
                    <path d="M56 551l4-36" stroke="#0a7cff" stroke-width="4"/>
                    <path d="M55 517l6-12 3 13z" fill="#0a7cff"/>
                    <g class="tripod-label">
                        <text x="47" y="511" fill="#0a7cff">Z</text>
                        <text x="89" y="549" fill="#d8141c">X</text>
                        <text x="58" y="539" fill="#0a0">Y</text>
                    </g>
                </svg>

                <form class="display-panel">
                    <h2>钢筋显示控制面板</h2>
                    <div class="display-list">
                        <label><input type="checkbox" checked>横向底筋</label>
                        <label><input type="checkbox" checked>纵向底筋</label>
                        <label><input type="checkbox" checked>显示其它图元</label>
                        <label><input type="checkbox" checked>显示详细公式</label>
                    </div>
                </form>
            </section>

            <div class="toolbar toolbar-snap">
                <i class="grip"></i>
                <button class="tool"><svg class="icon"><use href="#i-ortho"/></svg>正交</button>
                <button class="tool on"><svg class="icon"><use href="#i-snap"/></svg>对象捕捉</button>
                <button class="tool on"><svg class="icon"><use href="#i-dyninput"/></svg>动态输入</button>
                <i class="grip"></i>
                <button class="tool"><svg class="icon"><use href="#i-cross"/></svg>交点</button>
                <button class="tool on"><svg class="icon"><use href="#i-perp"/></svg>垂点</button>
                <button class="tool on"><svg class="icon"><use href="#i-mid"/></svg>中点</button>
                <button class="tool"><svg class="icon"><use href="#i-vertex"/></svg>顶点</button>
                <button class="tool"><svg class="icon"><use href="#i-coord"/></svg>坐标</button>
                <i class="grip"></i>
                <select class="pick pick-floor" aria-label="偏移方式"><option>不偏移</option></select>
                <i class="sep"></i>
                <label class="field" for="off-x">X=</label>
                <span class="spin"><input id="off-x" type="number" value="0"><i></i></span>
                <span class="unit">mm</span>
                <label class="field" for="off-y">Y=</label>
                <span class="spin"><input id="off-y" type="number" value="0"><i></i></span>
                <span class="unit">mm</span>
                <i class="sep"></i>
                <label class="rotate"><input type="checkbox">旋转</label>
                <span class="spin spin-wide"><input type="number" value="0.000" step="0.001" aria-label="旋转角度"><i></i></span>
                <span class="unit">°</span>
            </div>

            <section class="rebar">
                <div class="gutter"><button aria-label="关闭面板"><svg viewBox="0 0 10 10"><path d="M.500.5h9v9h-9z" fill="none" stroke="#533"/><path d="M2.500 2.500l5 5M7.500 2.500l-5 5" stroke="#533" stroke-width="1.500"/></svg></button></div>
                <div class="rebar-body">
                    <div class="toolbar toolbar-rebar">
                        <button class="nav" aria-label="首行"><svg class="icon"><use href="#i-first"/></svg></button>
                        <button class="nav" aria-label="上一行"><svg class="icon"><use href="#i-prev"/></svg></button>
                        <button class="nav" aria-label="下一行"><svg class="icon"><use href="#i-next"/></svg></button>
                        <button class="nav" aria-label="末行"><svg class="icon"><use href="#i-last"/></svg></button>
                        <i class="sep"></i>
                        <button class="nav" aria-label="上移"><svg class="icon"><use href="#i-up"/></svg></button>
                        <button class="nav" aria-label="下移"><svg class="icon"><use href="#i-down"/></svg></button>
                        <i class="sep"></i>
                        <button class="tool off"><svg class="icon"><use href="#i-insert"/></svg>插入</button>
                        <button class="tool off"><svg class="icon"><use href="#i-remove"/></svg>删除</button>
                        <button class="tool"><svg class="icon"><use href="#i-scale"/></svg>缩尺配筋</button>
                        <button class="tool"><svg class="icon"><use href="#i-info"/></svg>钢筋信息</button>
                        <button class="tool"><svg class="icon"><use href="#i-lib"/></svg>钢筋图库</button>
                        <button class="tool tight"><svg class="icon"><use href="#i-other"/></svg>其他<i class="arrow"></i></button>
                        <button class="tool">关闭</button>
                        <i class="sep"></i>
                        <span class="total">单构件钢筋总重(kg)：364.619</span>
                    </div>
                    <div class="grid-frame">
                        <div class="grid-clip">
                            <table class="rebar-table">
                                <colgroup>
                                    <col class="c-no"><col class="c-name"><col class="c-dia"><col class="c-grade"><col class="c-fig"><col class="c-shape"><col class="c-formula"><col class="c-desc"><col class="c-len"><col>
                                </colgroup>
                                <thead>
                                    <tr><th></th><th class="sel">筋号</th><th>直径<span class="n">(mm)</span></th><th>级别</th><th>图号</th><th>图形</th><th>计算公式</th><th>公式描述</th><th>长度<span class="n">(mm)</span></th><th></th></tr>
                                </thead>
                                <tbody>
                                    <tr><th class="cur">1*</th><td class="cur-name">横向底筋<span class="n">.1</span></td><td class="n">20</td><td class="mid"><svg class="grade"><use href="#i-grade"/></svg></td><td class="n">1</td><td class="mid"><span class="bar">5520</span></td><td class="n">5600-40-40</td><td>净长-保护层-保护层</td><td class="n">5520</td><td class="n">:</td></tr>
                                    <tr><th>2</th><td>横向底筋<span class="n">.2</span></td><td class="n">20</td><td class="mid"><svg class="grade"><use href="#i-grade"/></svg></td><td class="n">1</td><td class="mid"><span class="bar">5040</span></td><td class="n">0.9*5600</td><td><span class="n">0.9*</span>基础底长</td><td class="n">5040</td><td class="n">:</td></tr>
                                    <tr><th>3</th><td>纵向底筋<span class="n">.1</span></td><td class="n">12</td><td class="mid"><svg class="grade"><use href="#i-grade"/></svg></td><td class="n">1</td><td class="mid"><span class="bar">3820</span></td><td class="n">3900-40-40</td><td>净长-保护层-保护层</td><td class="n">3820</td><td class="n">:</td></tr>
                                    <tr><th>4</th><td>纵向底筋<span class="n">.2</span></td><td class="n">12</td><td class="mid"><svg class="grade"><use href="#i-grade"/></svg></td><td class="n">1</td><td class="mid"><span class="bar">3510</span></td><td class="n">0.9*3900</td><td><span class="n">0.9*</span>基础底宽</td><td class="n">3510</td><td class="n">:</td></tr>
                                    <tr class="empty"><th>5</th><td></td><td></td><td></td><td></td><td></td><td></td><td></td><td></td><td></td></tr>
                                </tbody>
                            </table>
                        </div>
                        <div class="vscroll"><i class="up"></i><i class="thumb"></i><i class="down"></i></div>
                        <div class="hscroll"><i class="prev"></i><i class="thumb"></i><i class="next"></i></div>
                    </div>
                </div>
            </section>
        </main>

        <aside class="props">
            <h2>属性编辑器</h2>
            <div class="prop-clip">
                <table class="prop-table">
                    <colgroup><col class="p-no"><col class="p-name"><col></colgroup>
                    <thead><tr><th></th><th>属性名称</th><th class="sel">属性值</th></tr></thead>
                    <tbody>
                        <tr class="cur"><th>1</th><td>名称</td><td class="n">DJ-2</td></tr>
                        <tr class="dim"><th>2</th><td>长度<span class="n">(mm)</span></td><td class="n">5600</td></tr>
                        <tr class="dim"><th>3</th><td>宽度<span class="n">(mm)</span></td><td class="n">3900</td></tr>
                        <tr class="dim"><th>4</th><td>高度<span class="n">(mm)</span></td><td class="n">400</td></tr>
                        <tr><th>5</th><td>顶标高<span class="n">(m)</span></td><td>层底标高<span class="n">+0.4(-2.65)</span></td></tr>
                        <tr><th>6</th><td>底标高<span class="n">(m)</span></td><td>层底标高<span class="n">(-3.05)</span></td></tr>
                        <tr><th>7</th><td>扣减板/筏板面筋</td><td>全部扣减</td></tr>
                        <tr><th>8</th><td>扣减板/筏板底筋</td><td>全部扣减</td></tr>
                        <tr><th>9</th><td>计算设置</td><td>按默认计算设置计算</td></tr>
                        <tr><th>10</th><td>搭接设置</td><td>按默认搭接设置计算</td></tr>
                        <tr><th>11</th><td>保护层厚度<span class="n">(mm)</span></td><td class="n">(40)</td></tr>
                        <tr><th>12</th><td>汇总信息</td><td>独立基础</td></tr>
                        <tr><th>13</th><td>备注</td><td></td></tr>
                        <tr class="dim group"><th>14</th><td><button aria-label="展开">+</button>显示样式</td><td></td></tr>
                    </tbody>
                </table>
            </div>
            <!-- callout from the property list to the selected pad -->
            <svg class="callout" viewBox="0 0 262 400">
                <rect x="19" y="18" width="223" height="292" fill="none" stroke="#f00000" stroke-width="3"/>
                <path d="M19 163L-430 382" stroke="#f00000" stroke-width="3"/>
                <path d="M-450 390l14-14 6 12z" fill="#f00"/>
            </svg>
        </aside>
    </div>

    <footer class="statusbar"><span></span><span></span><span></span></footer>
</div>
</body>
</html>
```
FILE: styles.css
```css
* {
    box-sizing: border-box;
}
body {
    margin: 0;
    font-family: "Open Sans", "Noto Sans CJK SC", sans-serif;
    font-size: 12px;
    line-height: 16px;
    color: #000;
    background: #f0f0f0;
    overflow: hidden;
}
button, input, select {
    font: inherit;
    color: inherit;
    margin: 0;
}
button {
    border: 0;
    padding: 0;
    background: none;
    white-space: nowrap;
}
.sprite {
    position: absolute;
    width: 0;
    height: 0;
}
.icon {
    width: 16px;
    height: 16px;
    flex: none;
    display: block;
}
.app {
    height: 100vh;
    display: flex;
    flex-direction: column;
}

/* title bar and menus */
.titlebar {
    height: 18px;
    flex: none;
    display: flex;
    justify-content: space-between;
    overflow: hidden;
    border-bottom: 1px solid #4a6a8c;
    background: linear-gradient(90deg, #a9d3dc 0, #7ed0cf 120px, #a8dede 210px, #4fb1dc 250px, #58b4e2 270px, #b5dcfa 280px, #b0d9f8 560px, #8fb8dc 620px, #a9cff0 800px, #95bde0 950px, #b5d4ee 100%);
}
.title-text {
    margin-left: -5px;
    font-family: "Noto Sans", "Noto Sans CJK SC", sans-serif;
    line-height: 14px;
}
.window-buttons {
    display: flex;
    height: 14px;
    border: 1px solid #5b7289;
    border-width: 0 0 1px 1px;
    border-radius: 0 0 0 4px;
    overflow: hidden;
}
.window-buttons button {
    width: 28px;
    border-right: 1px solid #5b7289;
    background: linear-gradient(#c5d6e6, #9db4ca);
}
.window-buttons .close-window {
    width: 21px;
    border-right: 0;
    background: linear-gradient(#d9684f, #b93a22);
}
.window-buttons svg {
    display: block;
    width: 27px;
    height: 12px;
}
.menubar {
    height: 30px;
    flex: none;
    display: flex;
    align-items: center;
    gap: 12px;
    padding-left: 1px;
    overflow: hidden;
    background: linear-gradient(90deg, #f0f0f0 707px, #fbfbfb 708px, #f6f6f6);
}
.menubar button,
.account {
    flex: none;
}
.has-icon {
    display: flex;
    align-items: center;
    gap: 4px;
}
.account {
    display: flex;
    align-items: center;
    gap: 8px;
    width: 256px;
    margin-left: auto;
}
.arrow {
    border: 4px solid transparent;
    border-top-color: currentColor;
    border-bottom: 0;
    border-width: 4px 3px 0;
    margin-left: 3px;
}

/* toolbars */
.toolbar {
    height: 28px;
    flex: none;
    display: flex;
    align-items: center;
    overflow: hidden;
    background: linear-gradient(#fafafa, #f1f1f1);
}
.toolbar-main {
    height: 29px;
    padding-left: 0;
}
.toolbar-main .tool:first-child {
    margin-left: -5px;
}
.toolbar-draw {
    height: 30px;
}
.toolbar-snap {
    height: 31px;
    border-top: 1px solid #fff;
}
.toolbar:has(.strip) {
    background: #f0f0f0;
}
.strip {
    height: 100%;
    display: flex;
    align-items: center;
    background: linear-gradient(#fcfcfc, #f2f2f2);
}
.strip-empty {
    width: 22px;
    background: linear-gradient(90deg, #fdfdfd, #f0f0f0);
}
.tool {
    height: 23px;
    flex: none;
    display: flex;
    align-items: center;
    gap: 4px;
    padding: 0 3px 0 2px;
    border: 1px solid transparent;
}
.tool.on {
    border-color: #4a98dc;
    background: #e5f1fb;
}
.tool.off {
    color: #8a8a8a;
}
.tight .arrow {
    margin-left: -2px;
}
.sep {
    width: 1px;
    height: 15px;
    flex: none;
    margin: 0 2px 0 3px;
    background: #b4b4b4;
}
.grip {
    width: 2px;
    height: 15px;
    flex: none;
    margin: 0 2px 0 5px;
    background: repeating-linear-gradient(#a8a8a8 0 2px, transparent 2px 4px);
}
.more {
    width: 34px;
    height: 100%;
    padding: 0 0 10px 18px;
    text-align: left;
    font-size: 16px;
    flex: none;
}
.more-far {
    margin-left: 48px;
}
.more-end {
    margin-left: auto;
}
.pick {
    width: 70px;
    height: 23px;
    flex: none;
    margin-right: 2px;
    padding: 0 12px 0 3px;
    border: 0;
    border-radius: 0;
    appearance: none;
    background: #fff url("data:image/svg+xml,%3Csvg xmlns='http://www.w3.org/2000/svg' width='7' height='4'%3E%3Cpath d='M0 0h7L3.500 4z'/%3E%3C/svg%3E") no-repeat right 5px center;
}
.pick-floor {
    width: 58px;
}
.pick-boxed {
    width: 56px;
    margin-right: 1px;
    border: 1px solid #777;
    background-color: #f4f4f4;
    background-position: right 3px center;
}
.nav {
    width: 24px;
    height: 23px;
    padding: 0 4px;
    flex: none;
}
.field {
    color: #777;
    margin: 0 4px 0 1px;
}
.unit {
    color: #777;
    margin: 0 3px 0 2px;
}
.spin {
    width: 58px;
    height: 23px;
    flex: none;
    display: flex;
    align-items: center;
    border: 1px solid #777;
    background: #f4f4f4;
}
.spin-wide {
    width: 69px;
}
.spin input {
    width: 100%;
    min-width: 0;
    padding: 0 8px 0 0;
    border: 0;
    background: none;
    text-align: right;
    color: #777;
    appearance: textfield;
}
.spin input::-webkit-inner-spin-button {
    display: none;
}
.spin i {
    width: 7px;
    height: 16px;
    flex: none;
    margin-right: 3px;
    background: url("data:image/svg+xml,%3Csvg xmlns='http://www.w3.org/2000/svg' width='7' height='16'%3E%3Cpath d='M1 4h5L3.500 1zM1 12h5l-2.500 3z' fill='%23444'/%3E%3C/svg%3E");
}
.rotate {
    display: flex;
    align-items: center;
    gap: 8px;
    margin: 0 4px 0 0;
}
.rotate input {
    width: 12px;
    height: 12px;
    appearance: none;
    border: 1px solid #999;
    background: #f4f4f4;
}

/* main area */
.workspace {
    flex: 1;
    min-height: 0;
    display: flex;
}
.left {
    flex: 1;
    min-width: 0;
    display: flex;
    flex-direction: column;
}
.viewport {
    flex: 1;
    min-height: 0;
    position: relative;
    margin: 0 2px 0 1px;
    background: #000;
}
.scene {
    position: absolute;
    inset: 0;
    width: 100%;
    height: 100%;
    shape-rendering: crispEdges;
}
.axis-label {
    font-size: 17px;
    fill: #e4e4e4;
    text-anchor: middle;
}
.tripod-label {
    font-family: "Liberation Sans", sans-serif;
    font-size: 14px;
}
.display-panel {
    position: absolute;
    left: 3px;
    top: 3px;
    width: 180px;
    padding: 0 5px 5px;
    border: 1px solid #b5b5b5;
    border-radius: 5px;
    background: linear-gradient(#3c3e3e, #2c2e2e 60px, #0c0c0c 61px, #050505);
}
.display-panel h2 {
    width: 104px;
    margin: 0;
    font-size: 12px;
    font-weight: normal;
    line-height: 25px;
    padding-left: 1px;
    background: radial-gradient(closest-side, #8a8c8c, transparent);
}
.display-list {
    height: 150px;
    padding: 1px 3px;
    border: 3px double #555;
    outline: 1px solid #ccc;
    background: #fff;
}
.display-list label {
    display: flex;
    align-items: center;
    gap: 4px;
    height: 12px;
    line-height: 12px;
}
.display-list input {
    width: 11px;
    height: 11px;
    appearance: none;
    border: 1px solid #8e9db5;
    background: #dfe7f2 url("data:image/svg+xml,%3Csvg xmlns='http://www.w3.org/2000/svg' width='9' height='9'%3E%3Cpath d='M2 4l2 3 4-6' fill='none' stroke='%23354f9c' stroke-width='1.500'/%3E%3C/svg%3E") center no-repeat;
}

/* rebar table */
.rebar {
    flex: none;
    display: flex;
}
.gutter {
    width: 13px;
    flex: none;
    padding: 2px 0 0 2px;
    background: radial-gradient(circle, #bbb 1px, transparent 1px) 2px 12px / 5px 5px;
}
.gutter button {
    display: block;
    background: #f0f0f0;
}
.gutter svg {
    display: block;
    width: 10px;
    height: 10px;
}
.rebar-body {
    flex: 1;
    min-width: 0;
}
.toolbar-rebar {
    height: 29px;
}
.total {
    margin-left: 3px;
}
.grid-frame {
    display: grid;
    grid-template-columns: 1fr 16px;
    grid-template-rows: 153px 17px;
    margin-right: 4px;
    border: 1px solid #999;
    background: #fff;
}
.grid-clip {
    overflow: hidden;
}
table {
    width: 100%;
    table-layout: fixed;
    border-collapse: collapse;
    font-family: "Liberation Sans", "Noto Sans CJK SC", sans-serif;
}
th, td {
    padding: 0;
    font-weight: normal;
    white-space: nowrap;
    border: 1px solid #b4b4b4;
}
th {
    background: linear-gradient(#fff, #ececee);
}
.n,
tbody th {
    font-family: "DejaVu Sans Mono", monospace;
    font-size: 10px;
}
.rebar-table {
    width: calc(100% + 20px);
    margin-left: -1px;
}
.rebar-table thead tr {
    height: 21px;
}
.rebar-table tbody tr {
    height: 29px;
}
.rebar-table tbody .empty {
    height: 20px;
}
.rebar-table td {
    padding-left: 2px;
    overflow: hidden;
    background: #ccffd9;
}
.rebar-table .empty td {
    background: #fff;
}
.rebar-table td:nth-child(2) {
    border-right-color: #000;
}
.rebar-table .mid {
    padding: 0;
    text-align: center;
}
th.sel {
    color: #6a0032;
    background: linear-gradient(#f9dfa9, #f0c069);
}
.rebar-table .cur {
    color: #6a0032;
    background: #ffcf87;
}
.rebar-table .cur-name {
    background: #b2eee0;
}
.c-no { width: 34px; }
.c-name { width: 73px; }
.c-dia { width: 56px; }
.c-grade { width: 36px; }
.c-fig { width: 33px; }
.c-shape { width: 201px; }
.c-formula { width: 207px; }
.c-desc { width: 156px; }
.c-len { width: 61px; }
.grade {
    display: block;
    width: 12px;
    height: 12px;
    margin: 0 auto;
}
.bar {
    display: block;
    width: 150px;
    margin: 0 auto 4px;
    border-bottom: 2px solid #000;
    line-height: 12px;
    font-size: 11px;
    color: #d01010;
}
.vscroll,
.hscroll {
    display: flex;
    align-items: center;
    justify-content: space-between;
    background: #ececec;
}
.vscroll {
    flex-direction: column;
    padding: 8px 0 6px;
}
.hscroll {
    padding: 0 6px 0 7px;
}
.vscroll i,
.hscroll i {
    border: 3px solid transparent;
}
.vscroll .up {
    border-top: 0;
    border-bottom-color: #444;
}
.vscroll .down {
    border-bottom: 0;
    border-top-color: #444;
}
.hscroll .prev {
    border-left: 0;
    border-right-color: #444;
}
.hscroll .next {
    border-right: 0;
    border-left-color: #444;
}
.vscroll .thumb,
.hscroll .thumb {
    border: 1px solid #969696;
    border-radius: 2px;
}
.vscroll .thumb {
    width: 15px;
    height: 56px;
    margin: 8px 0 auto;
    background: repeating-linear-gradient(#555 0 1px, transparent 1px 3px) center / 7px 7px no-repeat, linear-gradient(90deg, #f6f6f6, #cfcfcf);
}
.hscroll .thumb {
    width: 314px;
    height: 15px;
    margin: 0 auto 0 9px;
    background: repeating-linear-gradient(90deg, #555 0 1px, transparent 1px 3px) center / 7px 7px no-repeat, linear-gradient(#f6f6f6, #cfcfcf);
}

/* property editor */
.props {
    width: 262px;
    flex: none;
    position: relative;
    padding-top: 2px;
    border-left: 1px solid #8a8a8a;
    background: linear-gradient(#f0f0f0 20px, #fff 20px);
}
.props h2 {
    margin: 0 0 2px;
    border: 1px solid #888;
    font-size: 13px;
    font-weight: normal;
    line-height: 14px;
}
.prop-clip {
    overflow: hidden;
}
.prop-table {
    width: 284px;
}
.prop-table thead tr {
    height: 23px;
}
.prop-table tbody tr {
    height: 19px;
}
.prop-table td {
    line-height: 14px;
    padding-left: 20px;
}
.prop-table td:last-child {
    padding-left: 2px;
    color: #808080;
}
.p-no { width: 22px; }
.p-name { width: 121px; }
.prop-table .cur th {
    color: #6a0032;
    background: #ffcf87;
}
.prop-table .cur td {
    color: #fff;
    background: #3399ff;
}
.prop-table .cur td:last-child {
    color: #808080;
    background: #deeeff;
}
.prop-table .dim td {
    color: #808080;
}
.prop-table .group td:nth-child(2) {
    padding-left: 3px;
}
.prop-table .group button {
    width: 12px;
    height: 12px;
    margin-right: 5px;
    border: 1px solid #aaa;
    line-height: 10px;
    color: #000;
    background: #eee;
}
.callout {
    position: absolute;
    left: 0;
    top: 0;
    width: 262px;
    height: 400px;
    overflow: visible;
    pointer-events: none;
}

.statusbar {
    height: 7px;
    flex: none;
    display: flex;
    gap: 3px;
    padding-top: 3px;
}
.statusbar span {
    border: 1px solid #c4c4c4;
    border-bottom: 0;
    width: 48px;
}
.statusbar span:first-child {
    width: 74px;
}
.statusbar span:last-child {
    flex: 1;
}
```
